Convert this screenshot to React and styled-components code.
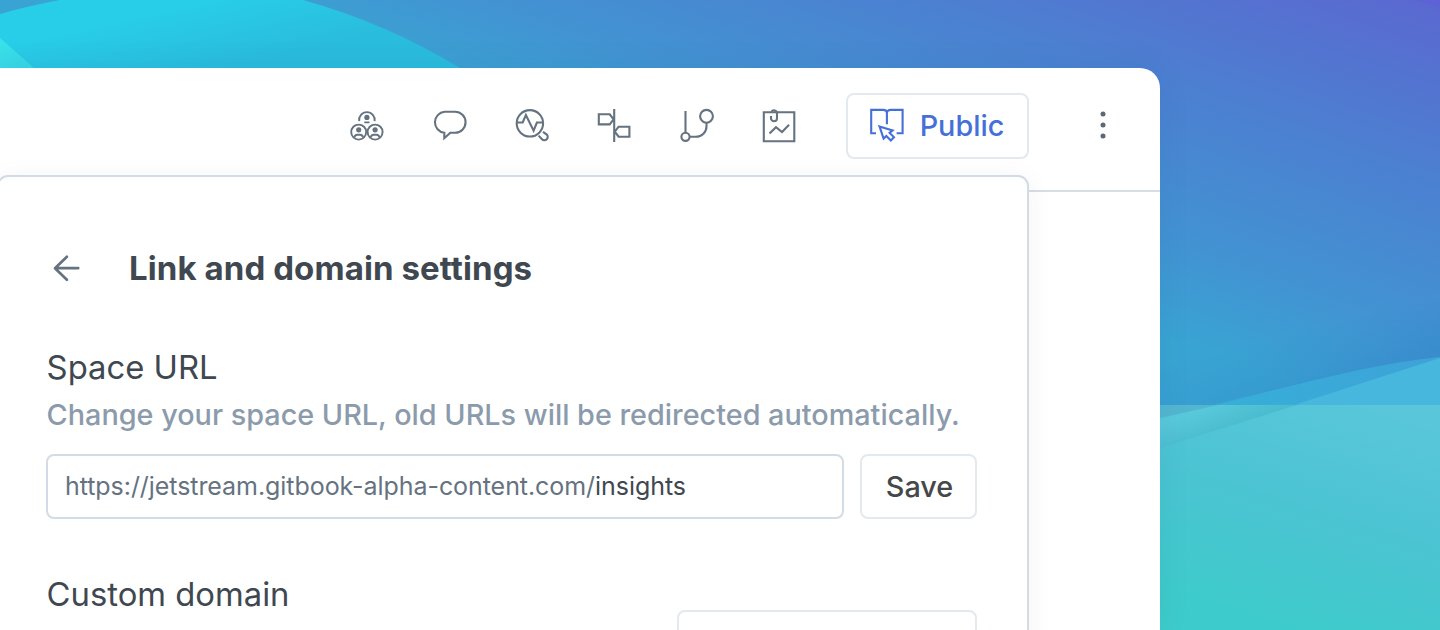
import React from "react";
import styled, { createGlobalStyle } from "styled-components";

const GlobalStyle = createGlobalStyle`
  *, *::before, *::after { box-sizing: border-box; }
  body { margin: 0; overflow: hidden; font-family: Inter, "Liberation Sans", sans-serif; }
`;

const Page = styled.div`
  position: relative;
  width: 1440px;
  height: 630px;
  padding-top: 68px;
  overflow: hidden;
  background: #4093cf;
`;

const Backdrop = styled.svg`
  position: absolute;
  inset: 0;
  width: 1440px;
  height: 630px;
`;

const Window = styled.main`
  position: relative;
  width: 1160px;
  height: 562px;
  border-radius: 0 20px 0 0;
  background: #fff;
  box-shadow: 0 0 32px rgba(30, 60, 110, 0.08);
`;

const Toolbar = styled.header`
  display: flex;
  align-items: center;
  justify-content: flex-end;
  height: 124px;
  padding: 0 39px 6px 0;
  border-bottom: 2px solid #d6dde5;
`;

const ToolGroup = styled.div`
  display: flex;
  gap: 46.4px;
  margin-right: 48.4px;
`;

const Glyph = styled.svg`
  display: block;
  flex: none;
  width: 36px;
  height: 36px;
  fill: none;
  stroke: ${(p) => p.$color || "#65727f"};
  stroke-width: ${(p) => p.$weight || 2.1};
`;

const Button = styled.button`
  display: flex;
  align-items: center;
  justify-content: center;
  flex: none;
  width: ${(p) => p.$width}px;
  height: ${(p) => p.$height || 66}px;
  padding: ${(p) => p.$inset || "0"};
  border: 2px solid #e4e9ee;
  border-radius: 8px;
  background: #fff;
  font: 500 28.8px Inter, sans-serif;
  color: ${(p) => p.$color || "#454749"};
`;

const PublicLabel = styled.span`
  margin-left: 15px;
`;

const MoreButton = styled.div`
  display: flex;
  margin-left: 56.5px;
`;

const Panel = styled.section`
  position: absolute;
  top: 107px;
  left: -3px;
  width: 1032px;
  height: 480px;
  padding: 66px 50px 0 47.6px;
  border: 2px solid #d3dbe4;
  border-radius: 11px;
  background: #fff;
  box-shadow: 0 4px 26px rgba(40, 50, 60, 0.06);
`;

const PanelHeader = styled.div`
  display: flex;
  align-items: center;
  height: 50px;
`;

const Title = styled.h1`
  margin: 0 0 0 46.4px;
  font-size: 33px;
  font-weight: 700;
  line-height: 50px;
  letter-spacing: 0.09px;
  color: #3f4850;
  white-space: nowrap;
`;

const SectionTitle = styled.h2`
  margin: 0;
  font-size: 32.8px;
  font-weight: 400;
  line-height: 50px;
  color: #3f4850;
`;

const UrlSection = styled.section`
  margin-top: 49px;
`;

const Hint = styled.p`
  margin: 1px 0 0;
  font-size: 28.8px;
  font-weight: 500;
  line-height: 44px;
  color: #8b9bab;
  white-space: nowrap;
`;

const UrlRow = styled.div`
  display: flex;
  gap: 16px;
  margin: 17px 0 0 -0.6px;
`;

const UrlField = styled.div`
  display: flex;
  align-items: center;
  width: 798px;
  height: 65px;
  padding: 0 17px 2px;
  border: 2px solid #d3dbe4;
  border-radius: 8px;
  font-size: 25px;
  letter-spacing: -0.06px;
  color: #65727f;
  white-space: nowrap;
`;

const Slug = styled.span`
  color: #3f4850;
`;

const DomainSection = styled.section`
  display: flex;
  justify-content: space-between;
  margin-top: 50px;
`;

const DomainButton = styled(Button)`
  margin-top: 41px;
`;

const Backgrounds = () => (
  <Backdrop viewBox="0 0 1440 630">
    <defs>
      <linearGradient id="sky" gradientUnits="userSpaceOnUse" x1="1170" y1="340" x2="1310" y2="-59">
        <stop offset="0" stopColor="#39a4d3" />
        <stop offset="0.22" stopColor="#4293d2" />
        <stop offset="0.57" stopColor="#4c80d1" />
        <stop offset="1" stopColor="#5c66d0" />
      </linearGradient>
      <linearGradient id="dome" gradientUnits="userSpaceOnUse" x1="200" y1="0" x2="215" y2="68">
        <stop offset="0" stopColor="#28cee8" />
        <stop offset="1" stopColor="#2abcdc" />
      </linearGradient>
      <linearGradient id="glint" gradientUnits="userSpaceOnUse" x1="0" y1="38" x2="10" y2="68">
        <stop offset="0" stopColor="#38e2ea" />
        <stop offset="1" stopColor="#39d7e6" />
      </linearGradient>
      <linearGradient id="wave" gradientUnits="userSpaceOnUse" x1="1200" y1="405" x2="1440" y2="360">
        <stop offset="0" stopColor="#36b0d8" />
        <stop offset="1" stopColor="#3ea2d8" />
      </linearGradient>
      <linearGradient id="sea" gradientUnits="userSpaceOnUse" x1="1360" y1="405" x2="1290" y2="630">
        <stop offset="0" stopColor="#59c6da" />
        <stop offset="0.5" stopColor="#4bc4d2" />
        <stop offset="1" stopColor="#3ecbcb" />
      </linearGradient>
      <linearGradient id="shallows" gradientUnits="userSpaceOnUse" x1="1215" y1="404" x2="1225" y2="430">
        <stop offset="0" stopColor="#58c9da" />
        <stop offset="1" stopColor="#4bbccf" />
      </linearGradient>
      <linearGradient id="shade" gradientUnits="userSpaceOnUse" x1="1290" y1="335" x2="1302" y2="383">
        <stop offset="0" stopColor="#3384c8" stopOpacity="0" />
        <stop offset="1" stopColor="#3384c8" stopOpacity="0.5" />
      </linearGradient>
      <linearGradient id="shadeFade" gradientUnits="userSpaceOnUse" x1="1160" y1="0" x2="1440" y2="0">
        <stop offset="0" stopColor="#fff" stopOpacity="0.3" />
        <stop offset="1" stopColor="#fff" />
      </linearGradient>
      <mask id="shadeMask" maskUnits="userSpaceOnUse" x="1160" y="270" width="280" height="150">
        <path fill="url(#shadeFade)" d="M1160 270h280v150h-280z" />
      </mask>
    </defs>
    <path fill="url(#sky)" d="M0 0h1440v630H0z" />
    <path fill="url(#dome)" d="M0 14Q28 6 60 0H303Q386 23 460 68H0z" />
    <path fill="url(#glint)" d="M0 38L34 68H0z" />
    <path fill="#5d62d6" d="M1415 0h25v7z" />
    <path fill="url(#shade)" mask="url(#shadeMask)" d="M1160 350L1440 270V357Q1360 367 1160 418z" />
    <path fill="url(#wave)" d="M1160 418Q1200 409 1220 404C1300 384 1370 364 1440 357V405H1160z" />
    <path fill="#47b7de" d="M1160 448L1440 358V405H1160z" />
    <path fill="#37b0d9" d="M1160 418L1218 405 1297 404 1297 405H1160z" />
    <path fill="url(#sea)" d="M1160 405H1440V630H1160z" />
    <path fill="url(#shallows)" d="M1160 418L1218 405H1297L1160 448z" />
    <path fill="#53b6d0" d="M1160 405H1218L1160 418z" />
  </Backdrop>
);

const PeopleIcon = () => (
  <Glyph viewBox="0 0 36 36" $weight={1.9}>
    <path d="M10.2 13.2A7.8 7.8 0 1 1 25.6 13.2" />
    <circle cx="9.7" cy="24.1" r="7.5" />
    <circle cx="26.1" cy="24.1" r="7.5" />
    <g fill="#65727f" stroke="none">
      <circle cx="17.9" cy="9.4" r="2.6" />
      <circle cx="9.7" cy="21.8" r="2.6" />
      <circle cx="26.1" cy="21.8" r="2.6" />
    </g>
    <path d="M15.3 14.4h5.2M5.3 29.3q.8-2.5 3-2.5h2.8q2.2 0 3 2.5M21.7 29.3q.8-2.5 3-2.5h2.8q2.2 0 3 2.5" />
  </Glyph>
);

const CommentIcon = () => (
  <Glyph viewBox="0 0 36 36">
    <path d="M12.3 24.7A10.5 10.5 0 0 1 12.6 3.8H23.1a10.45 10.45 0 0 1 0 20.9H18.3L12.3 30.2z" />
  </Glyph>
);

const InsightsIcon = () => (
  <Glyph viewBox="0 0 36 36">
    <circle cx="15.9" cy="15.3" r="13.2" />
    <path d="M2.8 14.5H8.7L11.9 7 19.6 22.7 22.9 14.5H29" />
    <path d="M24.6 27.6L28 31.2a3.3 3.3 0 0 0 4.8-4.6L29 23.8" />
  </Glyph>
);

const SignpostIcon = () => (
  <Glyph viewBox="0 0 36 36">
    <path d="M18.2 1V34M2.8 6.3H13.7L17.6 11.3 13.7 16.4H2.8zM33.4 18.7H22.6L18.8 23.7 22.6 28.7H33.4z" />
  </Glyph>
);

const BranchIcon = () => (
  <Glyph viewBox="0 0 36 36">
    <path d="M6.5 3V24.6M10.6 28.8H17A10.5 10.5 0 0 0 27.5 18.3V14.8" />
    <circle cx="6.5" cy="28.8" r="4.1" />
    <circle cx="27.5" cy="8.3" r="6.4" />
  </Glyph>
);

const ClipChartIcon = () => (
  <Glyph viewBox="0 0 36 36">
    <path d="M2.8 4.2H33.3V33.2H2.8z" />
    <path d="M10 8v2.2a3 3 0 0 0 6 0V5.3a3 3 0 0 0-5.6-1.5M8.5 25.5L15 19.2 21 24 28.1 16.8" />
  </Glyph>
);

const PublishIcon = () => (
  <Glyph viewBox="0 0 36 36" $color="#4470d8">
    <path d="M7 26.2H2.2V2.9H14Q17.9 2.9 17.9 6.2V17.3M17.9 6.2Q17.9 2.9 21.8 2.9H33.6V26.2H27.6" />
    <path d="M10.5 19.4L23.6 23.4 20.6 25.9 25 30.2 21.8 33.4 17.4 29 14.6 31.6z" />
  </Glyph>
);

const MoreIcon = () => (
  <Glyph viewBox="0 0 36 36">
    <g fill="#5d6874" stroke="none">
      <circle cx="18" cy="6" r="2.5" />
      <circle cx="18" cy="17" r="2.5" />
      <circle cx="18" cy="28" r="2.5" />
    </g>
  </Glyph>
);

const BackIcon = () => (
  <Glyph viewBox="0 0 36 36" $weight={2.7}>
    <path d="M31.2 18.2H8.3M19.9 6.7L8 18.2 19.9 29.7" strokeLinecap="round" strokeLinejoin="round" />
  </Glyph>
);

export default function App() {
  return (
    <>
      <GlobalStyle />
      <Page>
        <Backgrounds />
        <Window>
          <Toolbar>
            <ToolGroup>
              <PeopleIcon />
              <CommentIcon />
              <InsightsIcon />
              <SignpostIcon />
              <BranchIcon />
              <ClipChartIcon />
            </ToolGroup>
            <Button $width={183} $color="#4470d8" $inset="0 1px 2px 0">
              <PublishIcon />
              <PublicLabel>Public</PublicLabel>
            </Button>
            <MoreButton>
              <MoreIcon />
            </MoreButton>
          </Toolbar>
          <Panel>
            <PanelHeader>
              <BackIcon />
              <Title>Link and domain settings</Title>
            </PanelHeader>
            <UrlSection>
              <SectionTitle>Space URL</SectionTitle>
              <Hint>Change your space URL, old URLs will be redirected automatically.</Hint>
              <UrlRow>
                <UrlField>
                  <span>
                    https://jetstream.gitbook-alpha-content.com/<Slug>insights</Slug>
                  </span>
                </UrlField>
                <Button $width={117} $height={65} $inset="0 0 0 2px">Save</Button>
              </UrlRow>
            </UrlSection>
            <DomainSection>
              <SectionTitle>Custom domain</SectionTitle>
              <DomainButton $width={300} />
            </DomainSection>
          </Panel>
        </Window>
      </Page>
    </>
  );
}
